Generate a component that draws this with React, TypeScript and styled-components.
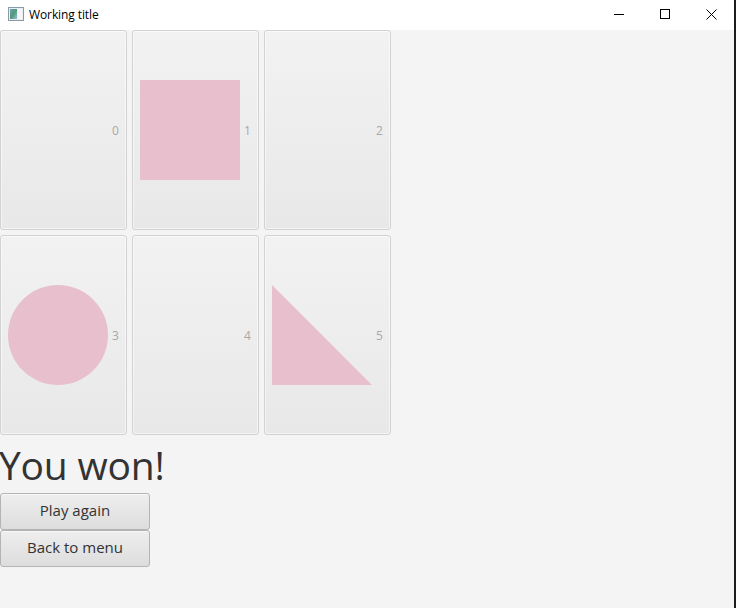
import React from "react";
import styled, { createGlobalStyle } from "styled-components";

const Global = createGlobalStyle`
  html, body { margin: 0; padding: 0; }
  body { width: 736px; height: 608px; overflow: hidden; background: #f4f4f4; }
  #root { width: 736px; height: 608px; }
  * { box-sizing: border-box; }
`;

const Frame = styled.div`
  display: flex;
  width: 736px;
  height: 608px;
`;

const Window = styled.div`
  flex: 1;
  display: flex;
  flex-direction: column;
  background: #f4f4f4;
`;

const Edge = styled.div`
  width: 2px;
  background: #1c1c1c;
`;

const TitleBar = styled.div`
  height: 30px;
  background: #ffffff;
  display: flex;
  align-items: center;
  padding-left: 8px;
`;

const AppIcon = styled.svg`
  width: 16px;
  height: 14px;
  margin-right: 5px;
  margin-top: -2px;
`;

const Title = styled.span`
  font-family: "Segoe UI", "Open Sans", "Noto Sans", sans-serif;
  font-size: 12px;
  color: #000;
  flex: 1;
  margin-top: -2px;
  letter-spacing: -0.1px;
`;

const Controls = styled.div`
  display: flex;
  height: 30px;
`;

const ControlButton = styled.div`
  width: 46px;
  height: 30px;
  display: flex;
  align-items: center;
  justify-content: center;
  padding-bottom: 2px;
`;

const Content = styled.div`
  flex: 1;
  display: flex;
  flex-direction: column;
  align-items: flex-start;
`;

const Grid = styled.div`
  display: grid;
  grid-template-columns: repeat(3, 127px);
  grid-auto-rows: 200px;
  gap: 5px;
`;

const Card = styled.div`
  border: 1px solid #d2d2d2;
  border-radius: 3px;
  background: linear-gradient(#f2f2f2, #e8e8e8);
  box-shadow: inset 0 0 0 1px rgba(255, 255, 255, 0.5);
  display: flex;
  align-items: center;
  padding-left: 7px;
  gap: 4px;
`;

const Graphic = styled.svg`
  width: 100px;
  height: 100px;
  flex: none;
`;

const CardLabel = styled.span`
  font-family: "Segoe UI", "Open Sans", "Noto Sans", sans-serif;
  font-size: 12px;
  color: #a8a8a8;
`;

const Heading = styled.div`
  font-family: "Segoe UI", "Open Sans", "Noto Sans", sans-serif;
  font-size: 39px;
  color: #333333;
  line-height: 48px;
  margin-top: 6px;
  margin-left: -1px;
  letter-spacing: -0.2px;
`;

const ActionButton = styled.button`
  width: 150px;
  height: 37px;
  padding: 0 0 3px 0;
  border: 1px solid #b4b4b4;
  border-radius: 3px;
  background: linear-gradient(#eeeeee, #dddddd);
  box-shadow: inset 0 1px 0 #f8f8f8;
  font-family: "Segoe UI", "Open Sans", "Noto Sans", sans-serif;
  font-size: 15px;
  color: #333333;
  cursor: pointer;
`;

const ButtonStack = styled.div`
  display: flex;
  flex-direction: column;
  margin-top: 4px;
`;

type Shape = "none" | "square" | "circle" | "triangle";

const shapes: Shape[] = ["none", "square", "none", "circle", "none", "triangle"];
const pink = "#e8bfcc";

function ShapeGraphic({ shape }: { shape: Shape }) {
  return (
    <Graphic viewBox="0 0 100 100">
      {shape === "square" && <rect x="0" y="0" width="100" height="100" fill={pink} />}
      {shape === "circle" && <circle cx="50" cy="50" r="50" fill={pink} />}
      {shape === "triangle" && <polygon points="0,0 0,100 100,100" fill={pink} />}
    </Graphic>
  );
}

export default function App() {
  return (
    <Frame>
      <Global />
      <Window>
        <TitleBar>
          <AppIcon viewBox="0 0 16 14">
            <defs>
              <linearGradient id="ig" x1="0" x2="1" y1="0" y2="1">
                <stop offset="0" stopColor="#6f9fb8" />
                <stop offset="0.5" stopColor="#4f9a7a" />
                <stop offset="1" stopColor="#9fc0d8" />
              </linearGradient>
            </defs>
            <rect x="0.5" y="0.5" width="15" height="13" fill="#e8eef2" stroke="#8a9aa6" />
            <rect x="2" y="2" width="7" height="10" fill="url(#ig)" />
            <rect x="10" y="2" width="4" height="10" fill="#f4f6f8" />
          </AppIcon>
          <Title>Working title</Title>
          <Controls>
            <ControlButton>
              <svg width="10" height="10" viewBox="0 0 10 10">
                <line x1="0" y1="5.5" x2="10" y2="5.5" stroke="#000" strokeWidth="1" />
              </svg>
            </ControlButton>
            <ControlButton>
              <svg width="10" height="10" viewBox="0 0 10 10">
                <rect x="0.5" y="0.5" width="9" height="9" fill="none" stroke="#000" strokeWidth="1" />
              </svg>
            </ControlButton>
            <ControlButton>
              <svg width="11" height="11" viewBox="0 0 11 11">
                <path d="M0.5 0.5 L10.5 10.5 M10.5 0.5 L0.5 10.5" stroke="#000" strokeWidth="1" />
              </svg>
            </ControlButton>
          </Controls>
        </TitleBar>
        <Content>
          <Grid>
            {shapes.map((s, i) => (
              <Card key={i}>
                <ShapeGraphic shape={s} />
                <CardLabel>{i}</CardLabel>
              </Card>
            ))}
          </Grid>
          <Heading>You won!</Heading>
          <ButtonStack>
            <ActionButton>Play again</ActionButton>
            <ActionButton>Back to menu</ActionButton>
          </ButtonStack>
        </Content>
      </Window>
      <Edge />
    </Frame>
  );
}
